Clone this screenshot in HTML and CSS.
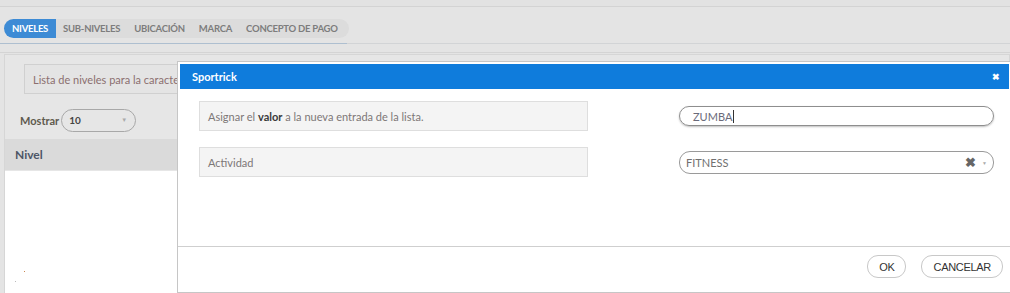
FILE: index.html
```html
<!DOCTYPE html>
<html lang="es">
<head>
<meta charset="utf-8">
<title>Niveles</title>
<link rel="stylesheet" href="styles.css">
</head>
<body>
<div class="topbar"></div>
<div class="tabs-wrap">
  <nav class="tabs">
    <span class="tab active">NIVELES</span>
    <span class="tab">SUB-NIVELES</span>
    <span class="tab">UBICACIÓN</span>
    <span class="tab">MARCA</span>
    <span class="tab">CONCEPTO DE PAGO</span>
  </nav>
</div>
<div class="tabline"><span class="tabline-active"></span></div>
<div class="gap"></div>
<section class="panel">
  <div class="info"><span class="info-text">Lista de niveles para la caracte</span></div>
  <div class="show">
    <span class="show-label">Mostrar</span>
    <span class="show-select">10<span class="caret">▼</span></span>
  </div>
  <div class="thead">Nivel</div>
  <div class="tbody"><i class="dot d1"></i><i class="dot d2"></i></div>
</section>

<div class="modal">
  <header class="modal-head">
    <span class="modal-title">Sportrick</span>
    <span class="modal-close">✖</span>
  </header>
  <div class="modal-body">
    <div class="row">
      <div class="label">Asignar el <b>valor</b> a la nueva entrada de la lista.</div>
      <div class="field"><div class="input">ZUMBA<span class="cursor"></span></div></div>
    </div>
    <div class="row">
      <div class="label">Actividad</div>
      <div class="field"><div class="select">FITNESS<span class="sel-x">✖</span><span class="sel-caret">▼</span></div></div>
    </div>
  </div>
  <footer class="modal-foot">
    <button class="btn btn-ok">OK</button>
    <button class="btn btn-cancel">CANCELAR</button>
  </footer>
</div>
</body>
</html>
```
FILE: styles.css
```css
* { box-sizing: border-box; }
html, body { margin: 0; height: 100%; }
body {
  background: #e4e4e4;
  font-family: Lato, "Open Sans", "Liberation Sans", sans-serif;
  width: 1010px;
  height: 293px;
  overflow: hidden;
  position: relative;
}
.topbar {
  height: 7px;
  background: #e2e2e2;
  border-bottom: 1px solid #d3d3d3;
}
.tabs-wrap {
  padding: 9px 0 0 4px;
  height: 36px;
}
.tabs {
  display: inline-flex;
  height: 19px;
  background: #dcdcdc;
  border-radius: 10px;
  padding-right: 4px;
}
.tab {
  display: flex;
  align-items: center;
  padding: 0 7px;
  font-size: 9.5px;
  font-weight: 700;
  color: #7d7d7d;
  letter-spacing: -0.25px;
}
.tab.active {
  background: #3d8bd5;
  color: #fff;
  border-radius: 10px 0 0 10px;
  padding: 0 8px 0 8px;
}
.tabline {
  height: 1px;
  background: #d2d4d6;
}
.tabline-active {
  display: block;
  width: 347px;
  height: 1px;
  background: #aebfd0;
}
.gap {
  height: 9px;
  border-bottom: 1px solid #d4d4d4;
}
.panel {
  margin: 1px 0 0 4px;
  background: #e6e6e6;
  border: 1px solid #d6d6d6;
  border-bottom: none;
  height: 240px;
  display: flex;
  flex-direction: column;
}
.info {
  margin: 9px 0 0 19px;
  height: 30px;
  width: 160px;
  background: #e4e4e4;
  border: 1px solid #d0d0d0;
  border-right: none;
  display: flex;
  align-items: center;
  padding-left: 8px;
  font-size: 11px;
  color: #8b6f6f;
  white-space: nowrap;
  overflow: hidden;
}
.show {
  display: flex;
  align-items: center;
  margin: 14px 0 0 15px;
  height: 24px;
}
.show-label {
  font-size: 11px;
  font-weight: 700;
  color: #5f5a4e;
  margin-right: 2px;
}
.show-select {
  width: 75px;
  height: 23px;
  border: 1px solid #a8a8a8;
  border-radius: 12px;
  display: flex;
  align-items: center;
  padding-left: 7px;
  font-size: 10px;
  font-weight: 700;
  color: #444;
  position: relative;
}
.caret {
  position: absolute;
  right: 8px;
  top: 6px;
  font-size: 6px;
  color: #aaa;
}
.thead {
  margin-top: 7px;
  height: 31px;
  background: #dadada;
  display: flex;
  align-items: center;
  padding-left: 10px;
  font-size: 12px;
  font-weight: 700;
  color: #4d5566;
}
.tbody {
  flex: 1;
  background: #fff;
  margin: 1px 0 0 0;
  position: relative;
  width: 172px;
}
.dot {
  position: absolute;
  width: 1px;
  height: 1px;
}
.d1 { left: 19px; top: 100px; background: #c9864f; }
.d2 { left: 10px; top: 110px; background: #bbb; }

/* modal */
.modal {
  position: absolute;
  left: 177px;
  top: 61px;
  width: 840px;
  height: 232px;
  background: #fff;
  border: 1px solid #c6c6c6;
  padding: 2px 0 0 2px;
  display: flex;
  flex-direction: column;
}
.modal-head {
  height: 25px;
  background: #0f7cdc;
  display: flex;
  align-items: center;
  justify-content: space-between;
  padding: 0 15px 0 12px;
  margin-right: 7px;
}
.modal-title {
  color: #fff;
  font-size: 11px;
  font-weight: 700;
}
.modal-close {
  color: #fff;
  font-size: 9px;
  font-weight: 700;
  margin-right: -6px;
}
.modal-body {
  padding: 12px 0 0 19px;
  height: 157px;
  display: flex;
  flex-direction: column;
  gap: 16px;
}
.row {
  display: flex;
  align-items: center;
}
.label {
  width: 389px;
  height: 30px;
  background: #f4f4f4;
  border: 1px solid #dedede;
  display: flex;
  align-items: center;
  padding-left: 8px;
  font-size: 11px;
  color: #7d7777;
  white-space: pre;
}
.label b { color: #3a3a3a; }
.field {
  margin-left: 91px;
  width: 315px;
}
.input {
  height: 20px;
  border: 1px solid #8e8e8e;
  border-radius: 10px;
  box-shadow: 0 1px 2px rgba(0,0,0,0.25);
  display: flex;
  align-items: center;
  padding-left: 13px;
  font-size: 11px;
  color: #6a6a7a;
}
.cursor {
  display: inline-block;
  width: 1px;
  height: 13px;
  background: #333;
  margin-left: 1px;
}
.select {
  height: 23px;
  border: 1px solid #9a9a9a;
  border-radius: 11px;
  display: flex;
  align-items: center;
  padding-left: 6px;
  font-size: 11px;
  color: #707070;
  position: relative;
}
.sel-x {
  position: absolute;
  right: 17px;
  top: 2px;
  font-size: 13px;
  color: #666;
  font-weight: 700;
}
.sel-caret {
  position: absolute;
  right: 6px;
  top: 8px;
  font-size: 5px;
  color: #aaa;
}
.modal-foot {
  border-top: 1px solid #cfcfcf;
  margin-left: -2px;
  flex: 1;
  display: flex;
  justify-content: flex-end;
  align-items: flex-start;
  gap: 15px;
  padding: 8px 13px 0 0;
}
.btn {
  height: 23px;
  border: 1px solid #c8c8c8;
  border-radius: 11px;
  background: #fff;
  font-family: "Liberation Sans", Arial, sans-serif;
  font-size: 11px;
  color: #333;
  padding: 0 9px;
  letter-spacing: -0.3px;
}
.btn-ok { padding: 0 11px; }
.btn-cancel { padding: 0 11px; }
```
